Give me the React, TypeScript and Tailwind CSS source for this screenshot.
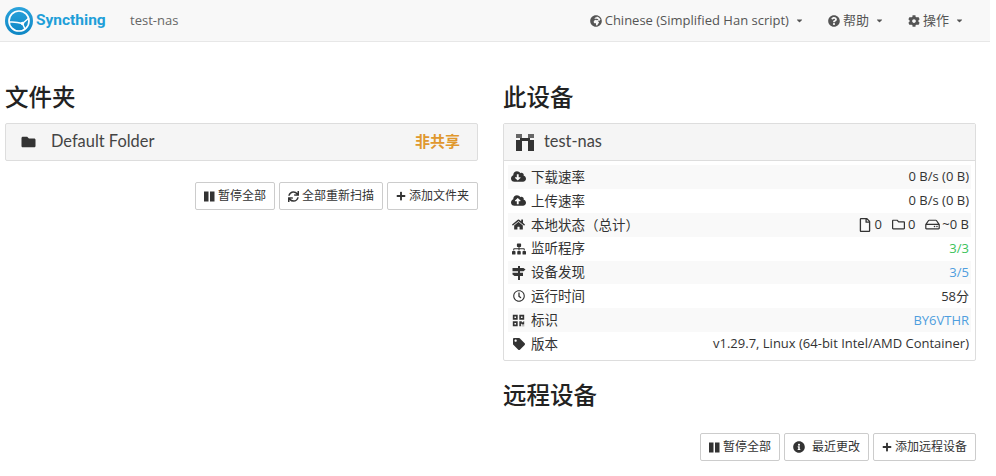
import type { ReactNode } from 'react'
import {
  FaCaretDown,
  FaCloudDownloadAlt,
  FaCloudUploadAlt,
  FaCog,
  FaFolder,
  FaGlobeAfrica,
  FaHome,
  FaInfoCircle,
  FaPlus,
  FaQrcode,
  FaQuestionCircle,
  FaRegClock,
  FaRegFile,
  FaRegFolder,
  FaRegHdd,
  FaSitemap,
  FaSync,
  FaTag,
} from 'react-icons/fa'

const body = "font-['Open_Sans','Noto_Sans_CJK_SC',sans-serif]"

function Logo() {
  return (
    <svg viewBox="0 0 28 28" className="w-[28px] h-[28px] shrink-0">
      <defs>
        <linearGradient id="logoFill" x1="0" y1="0" x2="0" y2="1">
          <stop offset="0" stopColor="#2ba3dc" />
          <stop offset="1" stopColor="#0d86c4" />
        </linearGradient>
      </defs>
      <circle cx="14" cy="14" r="14" fill="url(#logoFill)" />
      <circle cx="14" cy="14" r="10" fill="none" stroke="#fff" strokeWidth="1.7" />
      <path d="M4.5 15 Q11 14.5 17.5 16.5 L24 11 M17.5 16.5 L20 22" fill="none" stroke="#fff" strokeWidth="1.5" />
      <circle cx="17.5" cy="16.5" r="1.7" fill="#fff" />
    </svg>
  )
}

function Identicon() {
  return (
    <svg viewBox="0 0 18 17" className="w-[18px] h-[17px] shrink-0">
      <rect x="0" y="0" width="6" height="4" fill="#666" />
      <rect x="12" y="0" width="6" height="4" fill="#666" />
      <rect x="0" y="6" width="6" height="11" fill="#333" />
      <rect x="12" y="6" width="6" height="11" fill="#333" />
      <rect x="4" y="4" width="10" height="3" fill="#333" />
    </svg>
  )
}

function SignsIcon() {
  return (
    <svg viewBox="0 0 14 14" className="w-[14px] h-[14px]" fill="#333">
      <rect x="6" y="0" width="2" height="14" />
      <path d="M0.5 2H11.5L13.5 3.6L11.5 5.2H0.5Z" />
      <path d="M0.5 6.8H11V10H2.5L0.5 8.4Z" />
    </svg>
  )
}

function PauseIcon() {
  return (
    <svg viewBox="0 0 11 11" className="w-[11px] h-[11px]" fill="#333">
      <rect x="0" y="0.5" width="4.5" height="10" />
      <rect x="6" y="0.5" width="4.5" height="10" />
    </svg>
  )
}

function NavItem({ icon, label }: { icon: ReactNode; label: string }) {
  return (
    <div className="flex items-center gap-[3px] text-[13px] text-[#555]">
      {icon}
      <span>{label}</span>
      <FaCaretDown className="w-[9px] h-[9px] ml-[3px]" />
    </div>
  )
}

function Btn({ icon, label, className = '' }: { icon: ReactNode; label: string; className?: string }) {
  return (
    <button className={`h-[28px] flex items-center justify-center gap-[3px] border border-[#ccc] bg-white rounded-[2px] text-[12px] text-[#333] ${className}`}>
      {icon}
      <span>{label}</span>
    </button>
  )
}

const rows: { icon: ReactNode; label: string; value: ReactNode }[] = [
  { icon: <FaCloudDownloadAlt className="w-[15px] h-[15px]" />, label: '下载速率', value: '0 B/s (0 B)' },
  { icon: <FaCloudUploadAlt className="w-[15px] h-[15px]" />, label: '上传速率', value: '0 B/s (0 B)' },
  {
    icon: <FaHome className="w-[13px] h-[13px]" />,
    label: '本地状态（总计）',
    value: (
      <span className="flex items-center">
        <FaRegFile className="w-[12px] h-[14px] mr-[3px]" />0
        <FaRegFolder className="w-[13px] h-[13px] ml-[10px] mr-[3px]" />0
        <FaRegHdd className="w-[15px] h-[13px] ml-[10px] mr-[2px]" />~0 B
      </span>
    ),
  },
  { icon: <FaSitemap className="w-[14px] h-[14px]" />, label: '监听程序', value: <span className="text-[#3cc35c]">3/3</span> },
  { icon: <SignsIcon />, label: '设备发现', value: <span className="text-[#4f9ede]">3/5</span> },
  { icon: <FaRegClock className="w-[12px] h-[12px]" />, label: '运行时间', value: '58分' },
  { icon: <FaQrcode className="w-[13px] h-[13px]" />, label: '标识', value: <span className="text-[#4f9ede]">BY6VTHR</span> },
  { icon: <FaTag className="w-[12px] h-[12px]" />, label: '版本', value: 'v1.29.7, Linux (64-bit Intel/AMD Container)' },
]

export default function App() {
  return (
    <div className={`w-[996px] h-[476px] overflow-hidden bg-white text-[#333] ${body}`}>
      <nav className="w-[990px] h-[42px] bg-[#f8f8f8] border-b border-[#e7e7e7] flex items-center pl-[5px] pr-[26px]">
        <Logo />
        <span className="ml-[3px] text-[15.5px] font-bold text-[#1f9fd8] font-['Roboto',sans-serif] w-[94px]">Syncthing</span>
        <span className="text-[13px] text-[#666]">test-nas</span>
        <div className="ml-auto flex items-center gap-[24px]">
          <NavItem icon={<FaGlobeAfrica className="w-[12px] h-[12px]" />} label="Chinese (Simplified Han script)" />
          <NavItem icon={<FaQuestionCircle className="w-[12px] h-[12px]" />} label="帮助" />
          <NavItem icon={<FaCog className="w-[12px] h-[12px]" />} label="操作" />
        </div>
      </nav>

      <div className="flex items-start pl-[5px]">
        <section className="w-[473px] mr-[26px]">
          <h2 className="h-[81px] pt-[39px] text-[23.5px] leading-[32px] font-medium text-[#222]">文件夹</h2>
          <div className="h-[38px] bg-[#f5f5f5] border border-[#ddd] rounded-[2px] flex items-center pl-[15px] pr-[17px]">
            <FaFolder className="w-[15px] h-[14px] text-[#333]" />
            <span className="ml-[15px] pb-[1px] text-[16.4px] text-[#444] font-['Lato',sans-serif]">Default Folder</span>
            <span className="ml-auto pb-[1px] text-[15px] font-bold text-[#e0982e]">非共享</span>
          </div>
          <div className="mt-[21px] flex justify-end gap-[4px]">
            <Btn className="w-[80px]" icon={<PauseIcon />} label="暂停全部" />
            <Btn className="w-[104px]" icon={<FaSync className="w-[11px] h-[11px]" />} label="全部重新扫描" />
            <Btn className="w-[91px]" icon={<FaPlus className="w-[10px] h-[10px]" />} label="添加文件夹" />
          </div>
        </section>

        <section className="w-[473px] -ml-[1px]">
          <h2 className="h-[81px] pt-[39px] text-[23.5px] leading-[32px] font-medium text-[#222]">此设备</h2>
          <div className="h-[238px] border border-[#ddd] rounded-[2px]">
            <div className="h-[37px] bg-[#f5f5f5] border-b border-[#ddd] flex items-center pl-[12px]">
              <Identicon />
              <span className="ml-[10px] pb-[1px] text-[16.4px] text-[#444] font-['Lato',sans-serif]">test-nas</span>
            </div>
            <div className="px-[4px] pt-[4px]">
              {rows.map((row) => (
                <div key={row.label} className="h-[23.9px] px-[2px] flex items-center even:bg-white odd:bg-[#f9f9f9] text-[13px] text-[#333]">
                  <span className="w-[19px] flex justify-center mr-[3px] -ml-[1px]">{row.icon}</span>
                  <span className="text-[13.5px]">{row.label}</span>
                  <span className="ml-auto">{row.value}</span>
                </div>
              ))}
            </div>
          </div>
          <h2 className="mt-[18px] text-[23.5px] leading-[32px] font-medium text-[#222]">远程设备</h2>
          <div className="mt-[22px] flex justify-end gap-[4px]">
            <Btn className="w-[80px]" icon={<PauseIcon />} label="暂停全部" />
            <Btn className="w-[85px] gap-[7px]" icon={<FaInfoCircle className="w-[12px] h-[12px]" />} label="最近更改" />
            <Btn className="w-[103px]" icon={<FaPlus className="w-[10px] h-[10px]" />} label="添加远程设备" />
          </div>
        </section>
      </div>
    </div>
  )
}
